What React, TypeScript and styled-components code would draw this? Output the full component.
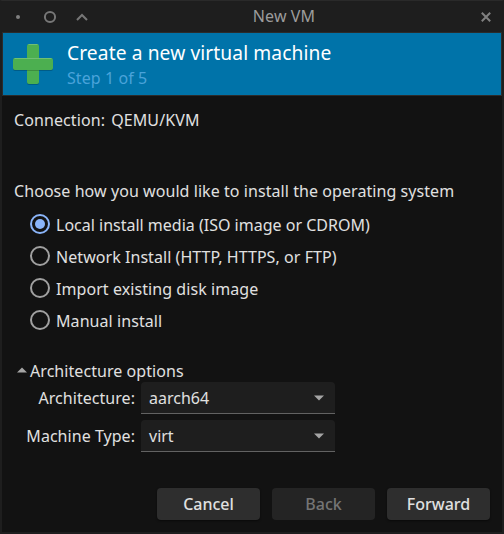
import React from "react";
import styled, { createGlobalStyle } from "styled-components";

const GlobalStyle = createGlobalStyle`
  * { box-sizing: border-box; }
  html, body { margin: 0; padding: 0; background: #121212; }
  body { overflow: hidden; }
`;

const Window = styled.div`
  width: 504px;
  height: 534px;
  display: flex;
  flex-direction: column;
  background: #121212;
  border: 2px solid #1e1e1e;
  border-top: 1px solid #2a2a2a;
  font-family: "Noto Sans", sans-serif;
  font-size: 16px;
  line-height: 22px;
  color: #e0e0e0;
  white-space: nowrap;
`;

const TitleBar = styled.header`
  flex: none;
  height: 31px;
  margin: 0 -2px;
  display: grid;
  grid-template-columns: 1fr auto 1fr;
  align-items: center;
  background: #1e1e1e;
  color: #9c9c9c;
`;

const WindowControls = styled.div<{ $end?: boolean }>`
  display: flex;
  justify-content: ${(p) => (p.$end ? "flex-end" : "flex-start")};
  svg { display: block; }
`;

const WindowTitle = styled.h1`
  margin: 0;
  padding: 0 0 2px 64px;
  font-size: 16px;
  font-weight: 400;
  letter-spacing: 0.1px;
`;

const Banner = styled.section`
  flex: none;
  height: 64px;
  display: flex;
  border: 1px solid #2b2b2b;
  background: #0073a9;
  padding-left: 9px;
  svg { display: block; margin-top: 10px; }
`;

const BannerText = styled.div`
  margin-left: 13px;
  padding-top: 6px;
`;

const BannerTitle = styled.h2`
  margin: 0;
  font-size: 19.2px;
  line-height: 27px;
  font-weight: 400;
  letter-spacing: 0.1px;
  color: #ffffff;
`;

const BannerStep = styled.p`
  margin: 1px 0 0;
  line-height: 22px;
  letter-spacing: 0.08px;
  color: #4aa3da;
`;

const Content = styled.main`
  flex: 1;
  display: flex;
  flex-direction: column;
  padding: 13px 12px 12px;
`;

const Connection = styled.div`
  display: flex;
  gap: 6px;
  letter-spacing: 0.1px;
`;

const Question = styled.p`
  margin: 49px 0 0;
  letter-spacing: 0.065px;
`;

const Options = styled.div`
  display: flex;
  flex-direction: column;
  margin: 7px 0 0 15px;
`;

const Option = styled.label<{ $tracking: number }>`
  display: flex;
  align-items: center;
  height: 32px;
  gap: 5px;
  letter-spacing: ${(p) => p.$tracking}px;
  svg { display: block; margin-top: -2px; }
`;

const Expander = styled.div`
  display: flex;
  align-items: center;
  margin-top: 23px;
  letter-spacing: 0.06px;
  svg { display: block; margin: -3px 2px 0 2px; }
`;

const Fields = styled.div`
  display: grid;
  grid-template-columns: 121px 194px;
  column-gap: 6px;
  row-gap: 6px;
`;

const FieldLabel = styled.span`
  text-align: right;
  line-height: 32px;
  letter-spacing: 0.04px;
`;

const Select = styled.div`
  height: 32px;
  display: flex;
  align-items: center;
  justify-content: space-between;
  padding: 1px 10px 0 8px;
  background: #1e1e1e;
  border-bottom: 1px solid #626262;
  border-radius: 4px 4px 0 0;
`;

const Actions = styled.footer`
  display: flex;
  justify-content: flex-end;
  gap: 12px;
  margin-top: auto;
`;

const Button = styled.button`
  width: 103px;
  height: 32px;
  padding: 0;
  border: 0;
  border-radius: 4px;
  background: #2e2e2e;
  color: #e0e0e0;
  font: 500 16px/32px "Noto Sans", sans-serif;
  box-shadow: 0 1px 2px rgba(0, 0, 0, 0.5);
  &:disabled {
    background: #242424;
    color: #757575;
    box-shadow: none;
  }
`;

const PlusIcon = () => (
  <svg width="42" height="42" viewBox="0 0 42 42">
    <rect x="15" y="2" width="12" height="40" rx="2" fill="#000" opacity="0.2" />
    <rect x="1" y="16" width="40" height="12" rx="2" fill="#000" opacity="0.2" />
    <rect x="15" y="1" width="12" height="40" rx="2" fill="#4caf50" />
    <path d="M16.5 1.5h9" stroke="#70bf73" />
    <path d="M15 27.5h12" stroke="#3d8c40" />
    <rect x="1" y="15" width="40" height="12" rx="2" fill="#4caf50" />
    <path d="M2.5 15.5h37" stroke="#70bf73" />
  </svg>
);

const Radio = ({ checked }: { checked?: boolean }) => (
  <svg width="22" height="22" viewBox="0 0 22 22">
    <circle cx="11" cy="11" r="9" fill="none" strokeWidth="2" stroke={checked ? "#8ab4f8" : "#a0a0a0"} />
    {checked && <circle cx="11" cy="11" r="5" fill="#8ab4f8" />}
  </svg>
);

const Arrow = ({ up }: { up?: boolean }) => (
  <svg width="12" height="6" viewBox="0 0 12 6">
    <path d={up ? "M1 5.5 6 .5l5 5z" : "M1 .5 6 5.5l5-5z"} fill="#a5a5a5" />
  </svg>
);

const installOptions = [
  { label: "Local install media (ISO image or CDROM)", tracking: 0 },
  { label: "Network Install (HTTP, HTTPS, or FTP)", tracking: 0.055 },
  { label: "Import existing disk image", tracking: 0.07 },
  { label: "Manual install", tracking: 0.07 },
];

const fields = [
  { label: "Architecture:", value: "aarch64" },
  { label: "Machine Type:", value: "virt" },
];

export default function App() {
  return (
    <>
      <GlobalStyle />
      <Window>
        <TitleBar>
          <WindowControls>
            <svg width="96" height="30" viewBox="0 0 96 30">
              <circle cx="18" cy="15" r="2" fill="#808080" />
              <circle cx="50" cy="15" r="5.1" fill="none" stroke="#777" strokeWidth="2" />
              <path d="m77 18 5-5 5 5" fill="none" stroke="#777" strokeWidth="2" />
            </svg>
          </WindowControls>
          <WindowTitle>New VM</WindowTitle>
          <WindowControls $end>
            <svg width="32" height="30" viewBox="0 0 32 30">
              <path d="m9.8 10.8 8.4 8.4m0-8.4-8.4 8.4" fill="none" stroke="#808080" strokeWidth="2" />
            </svg>
          </WindowControls>
        </TitleBar>
        <Banner>
          <PlusIcon />
          <BannerText>
            <BannerTitle>Create a new virtual machine</BannerTitle>
            <BannerStep>Step 1 of 5</BannerStep>
          </BannerText>
        </Banner>
        <Content>
          <Connection>
            <span>Connection:</span>
            <span>QEMU/KVM</span>
          </Connection>
          <Question>Choose how you would like to install the operating system</Question>
          <Options>
            {installOptions.map((option, i) => (
              <Option key={option.label} $tracking={option.tracking}>
                <Radio checked={i === 0} />
                {option.label}
              </Option>
            ))}
          </Options>
          <Expander>
            <Arrow up />
            Architecture options
          </Expander>
          <Fields>
            {fields.map((f) => (
              <React.Fragment key={f.label}>
                <FieldLabel>{f.label}</FieldLabel>
                <Select>
                  {f.value}
                  <Arrow />
                </Select>
              </React.Fragment>
            ))}
          </Fields>
          <Actions>
            <Button>Cancel</Button>
            <Button disabled>Back</Button>
            <Button>Forward</Button>
          </Actions>
        </Content>
      </Window>
    </>
  );
}
